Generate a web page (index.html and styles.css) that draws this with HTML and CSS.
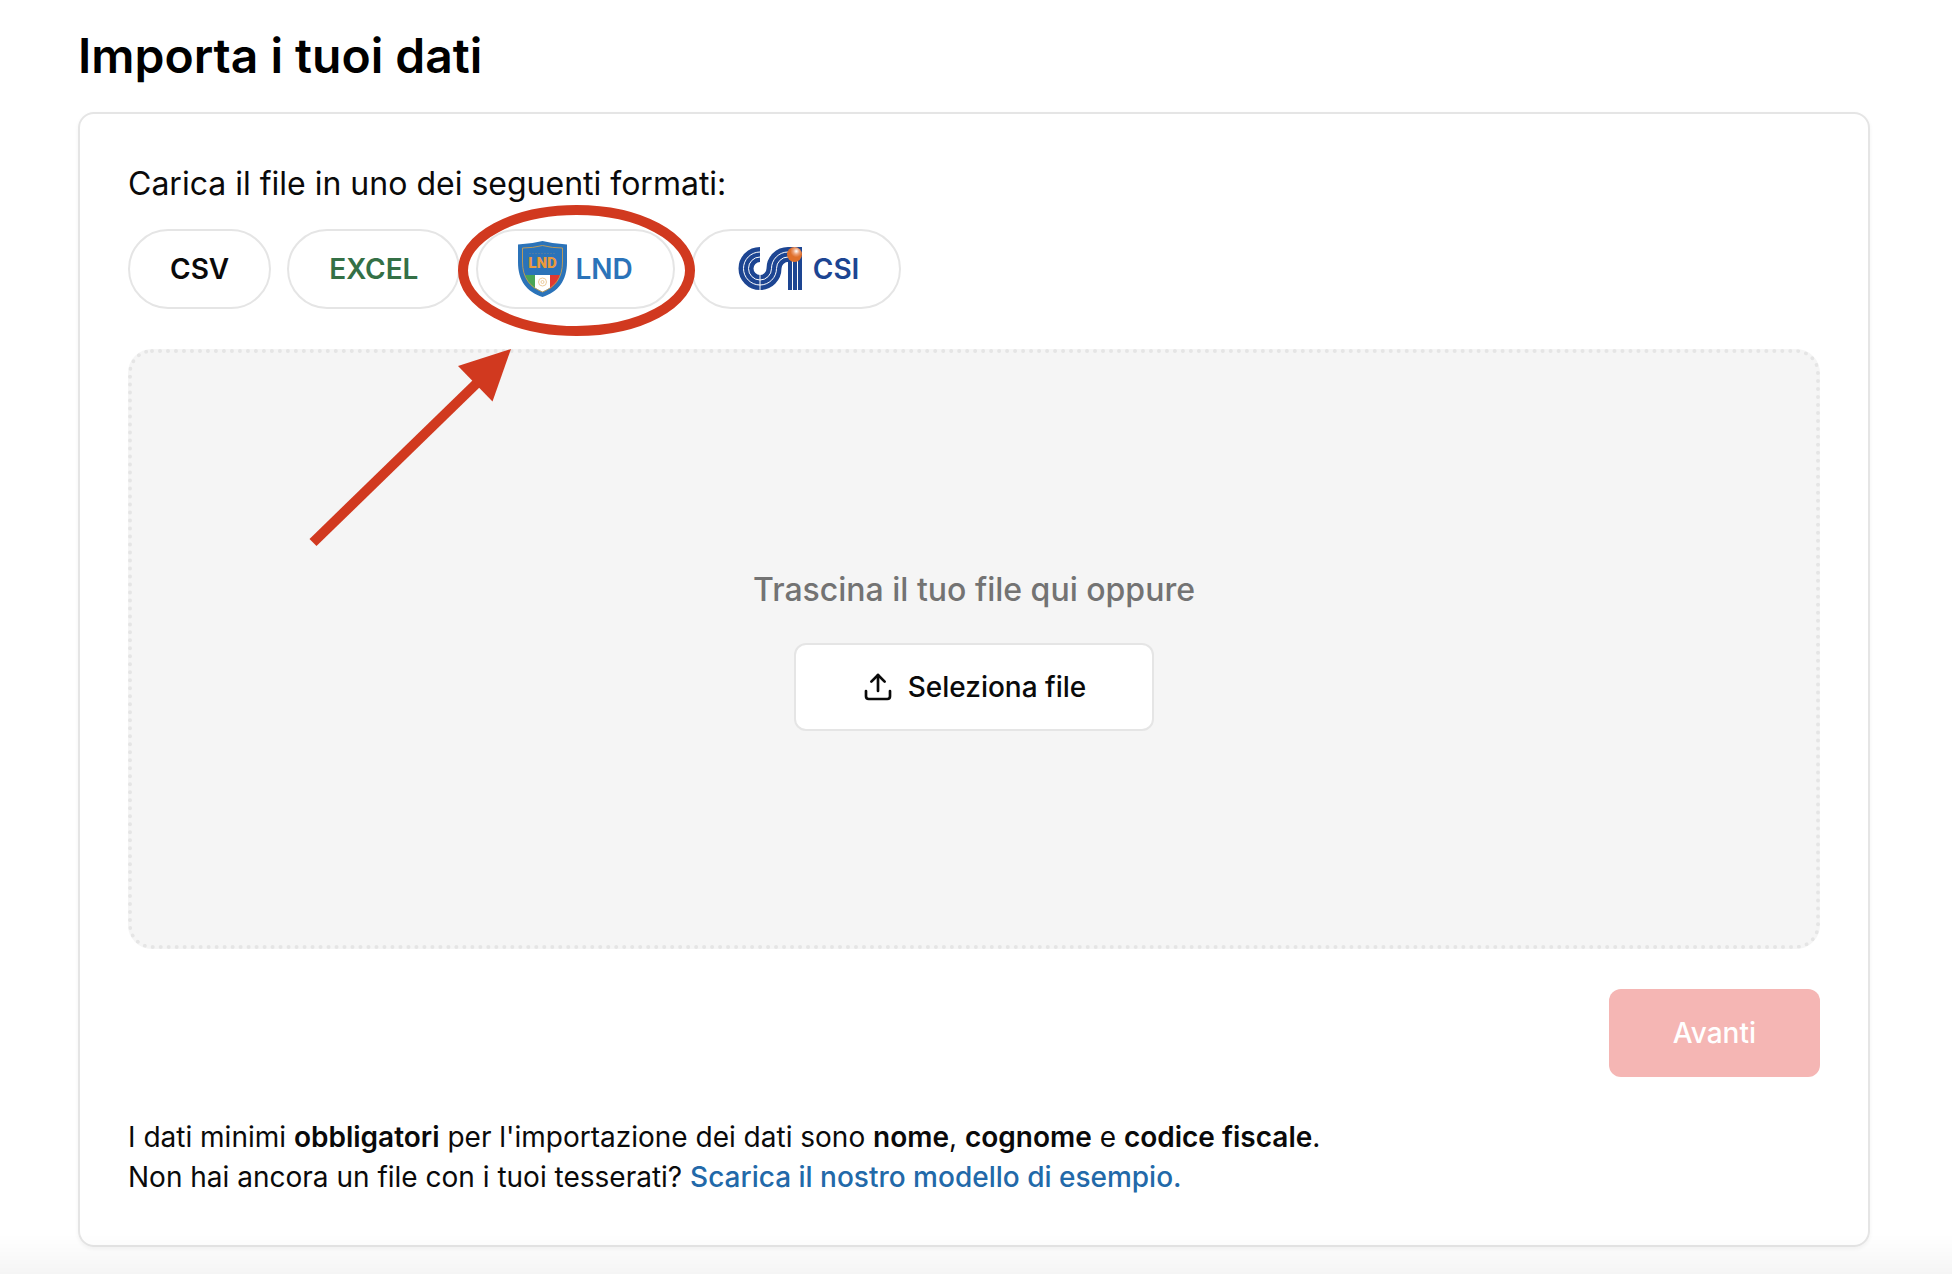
FILE: index.html
```html
<!DOCTYPE html>
<html lang="it">
<head>
    <meta charset="UTF-8">
    <meta name="viewport" content="width=device-width, initial-scale=1.0">
    <title>Importa i tuoi dati</title>
    <link rel="stylesheet" href="styles.css">
</head>
<body>
    <main>
        <h1>Importa i tuoi dati</h1>
        <div class="card">
            <p class="intro">Carica il file in uno dei seguenti formati:</p>
            <ul class="formats">
                <li class="format">CSV</li>
                <li class="format excel">EXCEL</li>
                <li class="format lnd">
                    <svg class="logo" width="49" height="56" viewBox="0 0 49 56" aria-hidden="true">
                        <path d="M0 3.500Q13 3 24.500 0Q36 3 49 3.500V21C49 40 40 51 24.500 56C9 51 0 40 0 21Z" fill="#2b73b9"/>
                        <path d="M7 34H17V48Q9 42 7 34Z" fill="#4aa556"/>
                        <path d="M17 34H32V47L24.500 51L17 47Z" fill="#fff"/>
                        <path d="M32 34H42Q40 42 32 48Z" fill="#e2382f"/>
                        <path d="M4.500 7Q15 7 24.500 4.500Q34 7 44.500 7V21C44.500 37 37 46 24.500 51C12 46 4.500 37 4.500 21Z" fill="none" stroke="#b99a5c" stroke-width="1"/>
                        <path d="M11 12.500H38" stroke="#4f7ba5" stroke-width="1" stroke-dasharray="2 1"/>
                        <text class="shield-text" x="24.500" y="27" text-anchor="middle">LND</text>
                        <circle cx="24.500" cy="41" r="4" fill="none" stroke="#eccb9b" stroke-width="1"/>
                        <circle cx="24.500" cy="41" r="1.500" fill="none" stroke="#eccb9b" stroke-width="1"/>
                    </svg>
                    LND
                    <!-- highlight around the LND format -->
                    <svg class="pointer" width="400" height="360" viewBox="0 0 400 360" aria-hidden="true">
                        <ellipse cx="276.500" cy="70.500" rx="113.500" ry="60.500" fill="none" stroke="#d1391f" stroke-width="10"/>
                        <path d="M13 342.500L177 183" stroke="#d1391f" stroke-width="10"/>
                        <path d="M211 149L158 166L192.500 201.500Z" fill="#d1391f"/>
                    </svg>
                </li>
                <li class="format csi">
                    <svg class="logo" width="72" height="56" viewBox="0 0 72 56" aria-hidden="true">
                        <defs>
                            <radialGradient id="ball" cx="0.62" cy="0.28" r="0.4">
                                <stop offset="0" stop-color="#fff"/>
                                <stop offset="0.5" stop-color="#eda077"/>
                                <stop offset="1" stop-color="#df6f2b"/>
                            </radialGradient>
                        </defs>
                        <g fill="none" stroke="#1d4592">
                            <path stroke-width="15" d="M27 13.500A14 14 0 0 0 27 41.500A14 14 0 0 0 41 27.500A14 14 0 0 1 55 13.500H69"/>
                            <path stroke-width="14" d="M62 14V49"/>
                        </g>
                        <g fill="none" stroke="#fff" stroke-width="1">
                            <path d="M27 11A16.500 16.500 0 0 0 27 44A16.500 16.500 0 0 0 43.500 27.500A11.500 11.500 0 0 1 55 16"/>
                            <path d="M27 16A11.500 11.500 0 0 0 27 39A11.500 11.500 0 0 0 38.500 27.500A16.500 16.500 0 0 1 55 11"/>
                            <path d="M59.500 16V49M64.500 16V49M27 34V49"/>
                        </g>
                        <path d="M50 27.500Q50 22 55 21V49H50Z" fill="#fff"/>
                        <circle cx="61.500" cy="13.500" r="7.500" fill="url(#ball)"/>
                    </svg>
                    CSI
                </li>
            </ul>

            <div class="dropzone">
                <p>Trascina il tuo file qui oppure</p>
                <button type="button" class="select-file">
                    <svg width="32" height="32" viewBox="0 0 24 24" fill="none" stroke="currentColor" stroke-width="2" stroke-linecap="round" stroke-linejoin="round" aria-hidden="true">
                        <path d="M21 15v4a2 2 0 0 1-2 2H5a2 2 0 0 1-2-2v-4"/>
                        <path d="M17 8l-5-5-5 5"/>
                        <path d="M12 3v12"/>
                    </svg>
                    Seleziona file
                </button>
            </div>

            <div class="actions">
                <button type="submit" class="next" disabled>Avanti</button>
            </div>

            <p class="notes">
                I dati minimi <strong>obbligatori</strong> per l'importazione dei dati sono <strong>nome</strong>, <strong>cognome</strong> e <strong>codice fiscale</strong>.<br>
                Non hai ancora un file con i tuoi tesserati? <a href="#">Scarica il nostro modello di esempio.</a>
            </p>
        </div>
    </main>
    <div class="bottom-fade"></div>
</body>
</html>
```
FILE: styles.css
```css
* {
    box-sizing: border-box;
}

body {
    font-family: Inter, sans-serif;
    font-size: 28px;
    line-height: 40px;
    background-color: white;
    color: #0a0a0a;
    margin: 0;
}

main {
    padding: 32px 82px 27px 78px;
}

h1 {
    margin: 0 0 32px;
    font-size: 48px;
    line-height: 48px;
    font-weight: 600;
    color: black;
}

p {
    margin: 0;
}

.card {
    display: flex;
    flex-direction: column;
    gap: 40px;
    padding: 48px;
    border: 2px solid #e5e5e5;
    border-radius: 16px;
    box-shadow: 0 2px 4px rgba(0, 0, 0, 0.05);
}

.intro {
    font-size: 32px;
    line-height: 43px;
    margin-bottom: -16px;
}

/* Format pills */
.formats {
    display: flex;
    flex-wrap: wrap;
    gap: 16px;
    margin: 0;
    padding: 0;
    list-style: none;
}

.format {
    position: relative;
    display: flex;
    align-items: center;
    gap: 8px;
    height: 80px;
    padding: 0 40px;
    border: 2px solid #e5e5e5;
    border-radius: 40px;
    font-weight: 600;
}

.excel {
    color: #347046;
}

.lnd {
    color: #2b73b9;
}

.csi {
    color: #1d4592;
}

.logo {
    display: block;
}

.shield-text {
    font-family: Roboto, sans-serif;
    font-size: 15px;
    font-weight: 900;
    fill: #eb9a3c;
}

.pointer {
    position: absolute;
    top: -31px;
    left: -178px;
    z-index: 1;
    pointer-events: none;
}

/* Upload area */
.dropzone {
    display: flex;
    flex-direction: column;
    align-items: center;
    justify-content: center;
    gap: 30px;
    min-height: 600px;
    border: 4px dotted #e5e5e5;
    border-radius: 24px;
    background-color: #f5f5f5;
}

.dropzone p {
    font-size: 32px;
    line-height: 46px;
    font-weight: 500;
    color: #737373;
}

button {
    display: flex;
    align-items: center;
    gap: 14px;
    height: 88px;
    padding: 0 64px;
    border: none;
    border-radius: 12px;
    font-family: inherit;
    font-size: 28px;
    font-weight: 500;
    cursor: pointer;
}

.select-file {
    padding: 0 66px;
    border: 2px solid #e5e5e5;
    background-color: white;
    color: #0a0a0a;
}

.actions {
    display: flex;
    justify-content: flex-end;
}

.next {
    background-color: #f5b6b4;
    color: white;
}

.next:disabled {
    cursor: default;
}

.notes strong {
    font-weight: 600;
}

.notes a {
    color: #2269a9;
    font-weight: 500;
    text-decoration: none;
}

.bottom-fade {
    position: fixed;
    left: 0;
    right: 0;
    bottom: 0;
    height: 40px;
    background: linear-gradient(transparent, rgba(0, 0, 0, 0.04));
    pointer-events: none;
}
```
